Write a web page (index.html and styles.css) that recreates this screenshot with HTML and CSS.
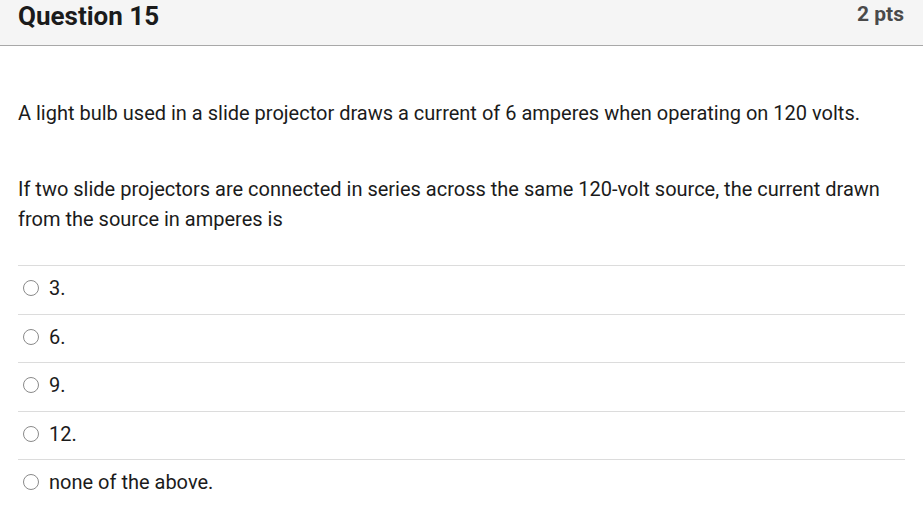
FILE: index.html
```html
<!DOCTYPE html>
<html>
<head>
<meta charset="utf-8">
<link rel="stylesheet" href="styles.css">
</head>
<body>
<div class="question">
  <div class="header">
    <h2 class="title">Question 15</h2>
    <div class="pts">2 pts</div>
  </div>
  <div class="content">
    <p class="text first">A light bulb used in a slide projector draws a current of 6 amperes when operating on 120 volts.</p>
    <p class="text">If two slide projectors are connected in series across the same 120-volt source, the current drawn from the source in amperes is</p>
    <div class="answers">
      <div class="answer"><span class="radio"></span><span class="label">3.</span></div>
      <div class="answer"><span class="radio"></span><span class="label">6.</span></div>
      <div class="answer"><span class="radio"></span><span class="label">9.</span></div>
      <div class="answer"><span class="radio"></span><span class="label">12.</span></div>
      <div class="answer"><span class="radio"></span><span class="label">none of the above.</span></div>
    </div>
  </div>
</div>
</body>
</html>
```
FILE: styles.css
```css
html, body {
  margin: 0;
  padding: 0;
  background: #ffffff;
}
body {
  font-family: Roboto, "Liberation Sans", sans-serif;
  color: #1b1b1b;
}
.question {
  width: 923px;
}
.header {
  display: flex;
  justify-content: space-between;
  align-items: flex-start;
  height: 46px;
  background: #f5f5f5;
  border-bottom: 1px solid #a8a8a8;
  padding: 3px 19px 0 18px;
  box-sizing: border-box;
}
.title {
  margin: 0;
  font-size: 26px;
  line-height: 26px;
  font-weight: 700;
  color: #1b1b1b;
}
.pts {
  margin-top: 1px;
  font-size: 21px;
  line-height: 21px;
  font-weight: 700;
  color: #4a4a4a;
}
.content {
  padding: 52px 18px 0 18px;
}
.text {
  margin: 0 0 31px 0;
  font-size: 20px;
  line-height: 30px;
  color: #1b1b1b;
}
.text.first {
  margin-bottom: 46px;
}
.answer {
  display: flex;
  align-items: center;
  height: 48.5px;
  padding-bottom: 3px;
  border-top: 1px solid #dcdcdc;
  box-sizing: border-box;
}
.radio {
  width: 16px;
  height: 16px;
  border: 1.5px solid #8a8a8a;
  border-radius: 50%;
  margin-left: 5px;
  margin-right: 10px;
  box-sizing: border-box;
}
.label {
  font-size: 20px;
  color: #1b1b1b;
}
```
